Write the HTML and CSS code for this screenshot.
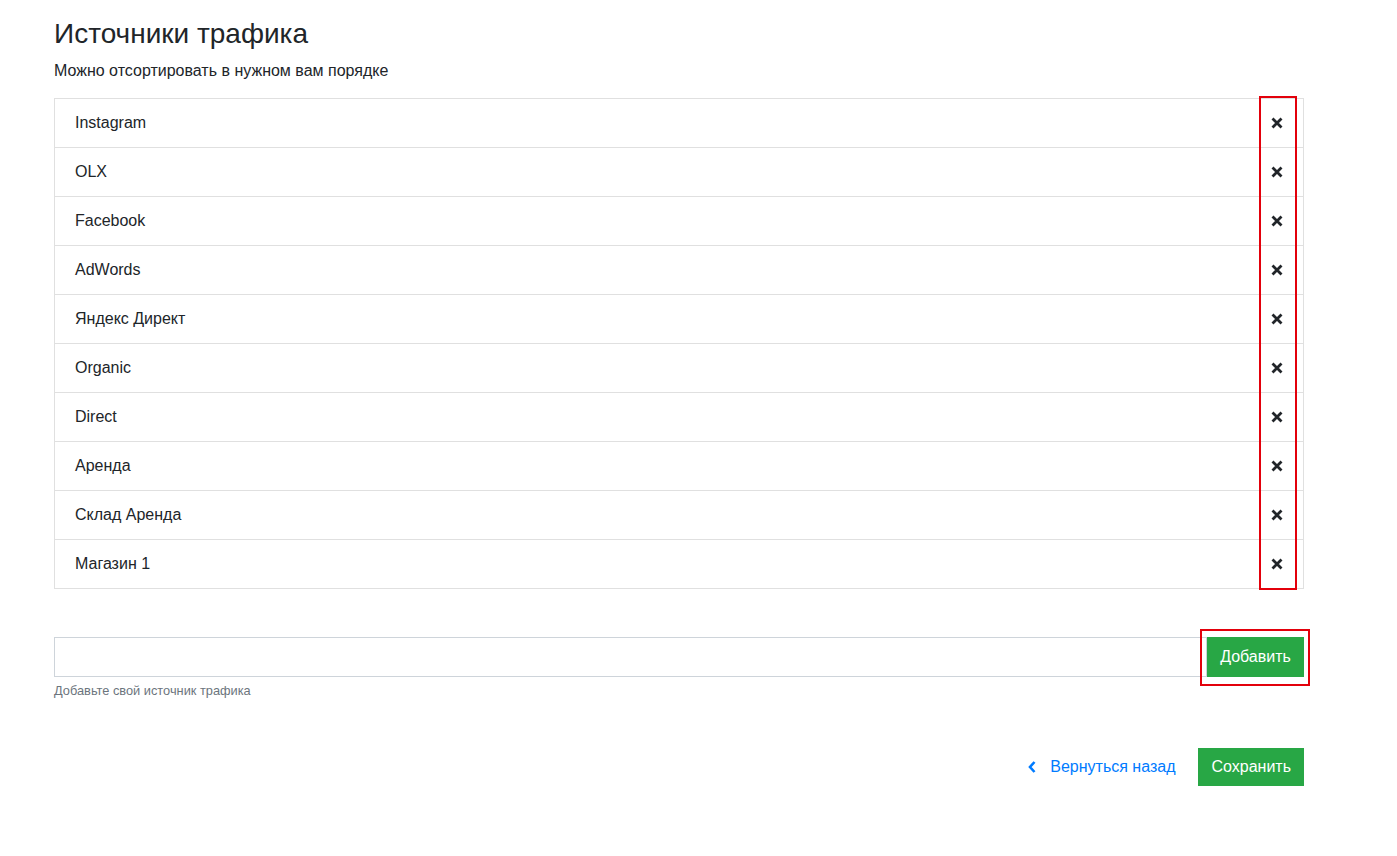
FILE: index.html
```html
<!DOCTYPE html>
<html lang="ru">
<head>
    <meta charset="UTF-8">
    <meta name="viewport" content="width=device-width, initial-scale=1.0">
    <title>Источники трафика</title>
    <link rel="stylesheet" href="styles.css">
</head>
<body>
    <div class="container">
        <h3 class="title">Источники трафика</h3>
        <p class="subtitle">Можно отсортировать в нужном вам порядке</p>

        <div class="sources">
            <ul class="source-list">
                <li class="source-item"><span>Instagram</span><button class="remove" type="button"><svg viewBox="0 0 12 12"><path d="M1.5 1.5L10.5 10.5M10.5 1.5L1.5 10.5"/></svg></button></li>
                <li class="source-item"><span>OLX</span><button class="remove" type="button"><svg viewBox="0 0 12 12"><path d="M1.5 1.5L10.5 10.5M10.5 1.5L1.5 10.5"/></svg></button></li>
                <li class="source-item"><span>Facebook</span><button class="remove" type="button"><svg viewBox="0 0 12 12"><path d="M1.5 1.5L10.5 10.5M10.5 1.5L1.5 10.5"/></svg></button></li>
                <li class="source-item"><span>AdWords</span><button class="remove" type="button"><svg viewBox="0 0 12 12"><path d="M1.5 1.5L10.5 10.5M10.5 1.5L1.5 10.5"/></svg></button></li>
                <li class="source-item"><span>Яндекс Директ</span><button class="remove" type="button"><svg viewBox="0 0 12 12"><path d="M1.5 1.5L10.5 10.5M10.5 1.5L1.5 10.5"/></svg></button></li>
                <li class="source-item"><span>Organic</span><button class="remove" type="button"><svg viewBox="0 0 12 12"><path d="M1.5 1.5L10.5 10.5M10.5 1.5L1.5 10.5"/></svg></button></li>
                <li class="source-item"><span>Direct</span><button class="remove" type="button"><svg viewBox="0 0 12 12"><path d="M1.5 1.5L10.5 10.5M10.5 1.5L1.5 10.5"/></svg></button></li>
                <li class="source-item"><span>Аренда</span><button class="remove" type="button"><svg viewBox="0 0 12 12"><path d="M1.5 1.5L10.5 10.5M10.5 1.5L1.5 10.5"/></svg></button></li>
                <li class="source-item"><span>Склад Аренда</span><button class="remove" type="button"><svg viewBox="0 0 12 12"><path d="M1.5 1.5L10.5 10.5M10.5 1.5L1.5 10.5"/></svg></button></li>
                <li class="source-item"><span>Магазин 1</span><button class="remove" type="button"><svg viewBox="0 0 12 12"><path d="M1.5 1.5L10.5 10.5M10.5 1.5L1.5 10.5"/></svg></button></li>
            </ul>
            <div class="mark mark-remove"></div>
        </div>

        <form class="add-form">
            <div class="input-group">
                <input type="text" class="add-input">
                <button type="submit" class="btn btn-success add-btn">Добавить</button>
                <div class="mark mark-add"></div>
            </div>
            <small class="hint">Добавьте свой источник трафика</small>
        </form>

        <div class="actions">
            <a href="#" class="back-link">
                <svg viewBox="0 0 10 14"><path d="M7.5 2L3 7l4.5 5"/></svg>
                Вернуться назад
            </a>
            <button type="button" class="btn btn-success">Сохранить</button>
        </div>
    </div>
</body>
</html>
```

FILE: styles.css
```css
body {
    margin: 0;
    background: #fff;
    color: #212529;
    font-family: "Liberation Sans", Arial, sans-serif;
    font-size: 16px;
    line-height: 1.5;
}
.container {
    width: 1250px;
    margin-left: 54px;
    padding-top: 17px;
}
.title {
    font-size: 28px;
    font-weight: 500;
    line-height: 1.2;
    margin: 0 0 8px;
}
.subtitle {
    font-size: 16px;
    margin: 0 0 15px;
}
.sources {
    position: relative;
}
.source-list {
    list-style: none;
    margin: 0;
    padding: 0;
    border: 1px solid #e0e0e0;
}
.source-item {
    display: flex;
    justify-content: space-between;
    align-items: center;
    padding: 12px 20px;
    border-top: 1px solid #e0e0e0;
}
.source-item:first-child {
    border-top: none;
}
.remove {
    background: none;
    border: none;
    padding: 0;
    width: 12px;
    height: 12px;
    cursor: pointer;
    display: flex;
}
.remove svg {
    width: 12px;
    height: 12px;
    stroke: #212529;
    stroke-width: 2.8;
    fill: none;
}
/* red highlight frames */
.mark {
    position: absolute;
    border: 2px solid #e3000b;
    pointer-events: none;
}
.mark-remove {
    top: -2px;
    bottom: -1px;
    right: 7px;
    width: 34px;
}
.add-form {
    margin-top: 48px;
}
.input-group {
    position: relative;
    display: flex;
}
.add-input {
    flex: 1;
    height: 40px;
    box-sizing: border-box;
    border: 1px solid #ced4da;
    border-radius: 0;
    padding: 6px 12px;
    font-size: 16px;
    outline: none;
}
.btn {
    font-family: inherit;
    font-size: 16px;
    line-height: 1.5;
    border: 1px solid transparent;
    border-radius: 0;
    padding: 6px 12px;
    cursor: pointer;
}
.btn-success {
    background-color: #28a745;
    border-color: #28a745;
    color: #fff;
}
.add-btn {
    height: 40px;
    width: 97px;
}
.mark-add {
    top: -8px;
    bottom: -9px;
    right: -6px;
    width: 106px;
}
.hint {
    display: block;
    margin-top: 4px;
    font-size: 12.8px;
    color: #6c757d;
}
.actions {
    display: flex;
    justify-content: flex-end;
    align-items: center;
    gap: 23px;
    margin-top: 48px;
}
.back-link {
    color: #007bff;
    text-decoration: none;
    display: flex;
    align-items: center;
    gap: 13px;
}
.back-link svg {
    width: 10px;
    height: 14px;
    stroke: #007bff;
    stroke-width: 2.6;
    fill: none;
}
```
